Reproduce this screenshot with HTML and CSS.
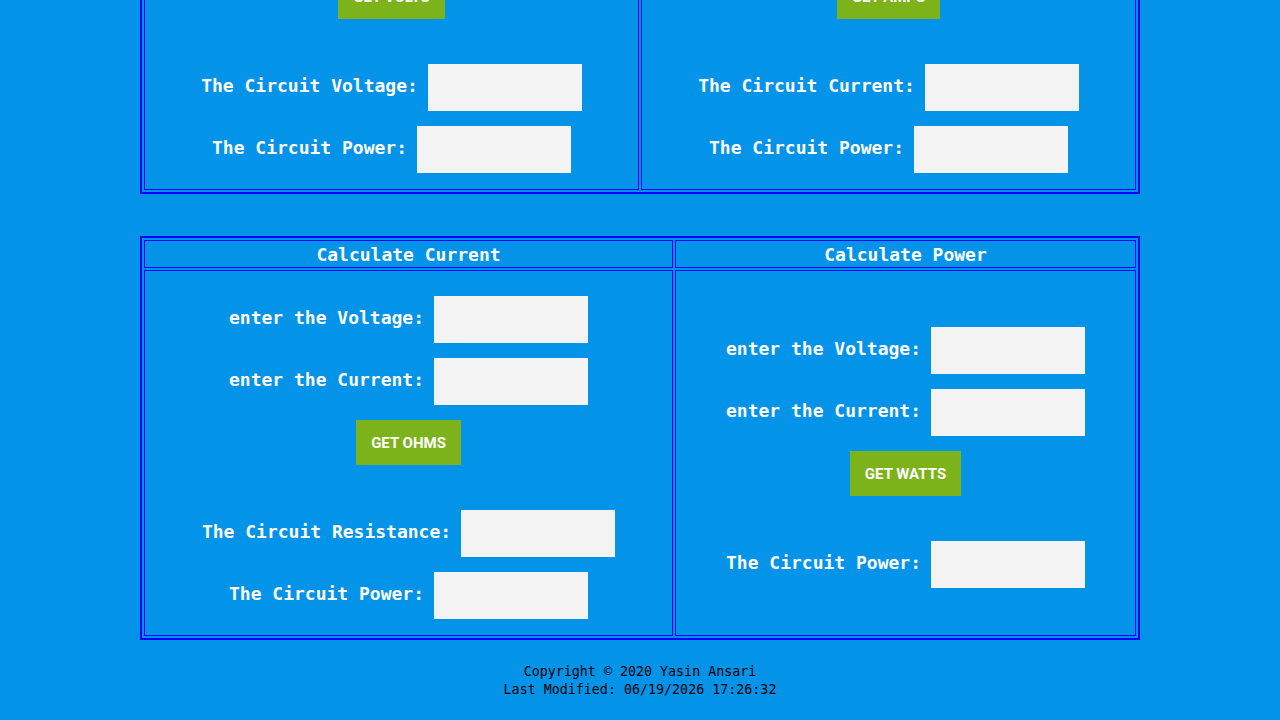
FILE: index.html
```html
<!DOCTYPE html>
<html lang="en">
<head>
    <meta charset="UTF-8">
    <meta name="viewport" content="width=device-width, initial-scale=1.0">
    <title>Ohm's Law Calculator</title>
    <link rel="stylesheet" href="styles.css">
</head>
<body>
    <div class="calculators">

        <!-- Voltage / Current -->
        <table class="calc-table">
            <tr>
                <th>Calculate Voltage</th>
                <th>Calculate Resistance</th>
            </tr>
            <tr>
                <td>
                    <form class="calc">
                        <div class="field"><label>enter the Current:</label><input type="text"></div>
                        <div class="field"><label>enter the Resistance:</label><input type="text"></div>
                        <button type="button">GET VOLTS</button>
                        <div class="results">
                            <div class="field"><label>The Circuit Voltage:</label><input type="text" readonly></div>
                            <div class="field"><label>The Circuit Power:</label><input type="text" readonly></div>
                        </div>
                    </form>
                </td>
                <td>
                    <form class="calc">
                        <div class="field"><label>enter the Voltage:</label><input type="text"></div>
                        <div class="field"><label>enter the Resistance:</label><input type="text"></div>
                        <button type="button">GET AMPS</button>
                        <div class="results">
                            <div class="field"><label>The Circuit Current:</label><input type="text" readonly></div>
                            <div class="field"><label>The Circuit Power:</label><input type="text" readonly></div>
                        </div>
                    </form>
                </td>
            </tr>
        </table>

        <!-- Resistance / Power -->
        <table class="calc-table">
            <tr>
                <th class="wide">Calculate Current</th>
                <th>Calculate Power</th>
            </tr>
            <tr>
                <td>
                    <form class="calc">
                        <div class="field"><label>enter the Voltage:</label><input type="text"></div>
                        <div class="field"><label>enter the Current:</label><input type="text"></div>
                        <button type="button">GET OHMS</button>
                        <div class="results">
                            <div class="field"><label>The Circuit Resistance:</label><input type="text" readonly></div>
                            <div class="field"><label>The Circuit Power:</label><input type="text" readonly></div>
                        </div>
                    </form>
                </td>
                <td>
                    <form class="calc">
                        <div class="field"><label>enter the Voltage:</label><input type="text"></div>
                        <div class="field"><label>enter the Current:</label><input type="text"></div>
                        <button type="button">GET WATTS</button>
                        <div class="results">
                            <div class="field"><label>The Circuit Power:</label><input type="text" readonly></div>
                        </div>
                    </form>
                </td>
            </tr>
        </table>
    </div>

    <footer class="footer">
        <p>Copyright &copy; 2020 Yasin Ansari</p>
        <p>Last Modified: 06/19/2026 17:26:32</p>
    </footer>
</body>
</html>
```

FILE: styles.css
```css
body {
    margin: 0;
    padding: 0 8px;
    background-color: #0393e9;
    font-family: "DejaVu Sans Mono", monospace;
    color: white;
}

/* page is viewed scrolled down to the lower tables */
.calculators {
    margin-top: -210px;
}

.calc-table {
    width: 1000px;
    margin: 0 auto;
    border: 2px solid #0000ff;
    border-spacing: 2px;
}
.calc-table + .calc-table {
    margin-top: 42px;
}
.calc-table th {
    border: 1px solid #0000ff;
    padding: 1px 0 0;
    font-size: 18px;
    line-height: 25px;
}
.calc-table th.wide {
    width: 527px;
}
.calc-table td {
    border: 1px solid #0000ff;
    padding: 25px 0 16px;
    vertical-align: middle;
}

.calc {
    display: flex;
    flex-direction: column;
    align-items: center;
    gap: 15px;
    margin: 0;
}
.results {
    display: flex;
    flex-direction: column;
    align-items: center;
    gap: 15px;
    margin-top: 30px;
}
.field {
    display: flex;
    align-items: center;
    gap: 10px;
}
.field label {
    margin-bottom: 4px;
    font-size: 18px;
    font-weight: bold;
}
.field input {
    width: 154px;
    height: 47px;
    box-sizing: border-box;
    padding: 0 6px;
    border: none;
    background-color: #f3f3f3;
}

.calc button {
    height: 45px;
    padding: 0 15px;
    border: none;
    background-color: #7cb31a;
    color: white;
    font-family: Roboto, sans-serif;
    font-size: 15px;
    font-weight: bold;
    cursor: pointer;
}
.calc button:hover {
    background-color: #6fa016;
}

.footer {
    margin-top: 23px;
    text-align: center;
    color: black;
    font-size: 13.33px;
    line-height: 18px;
}
.footer p {
    margin: 0;
}
```
